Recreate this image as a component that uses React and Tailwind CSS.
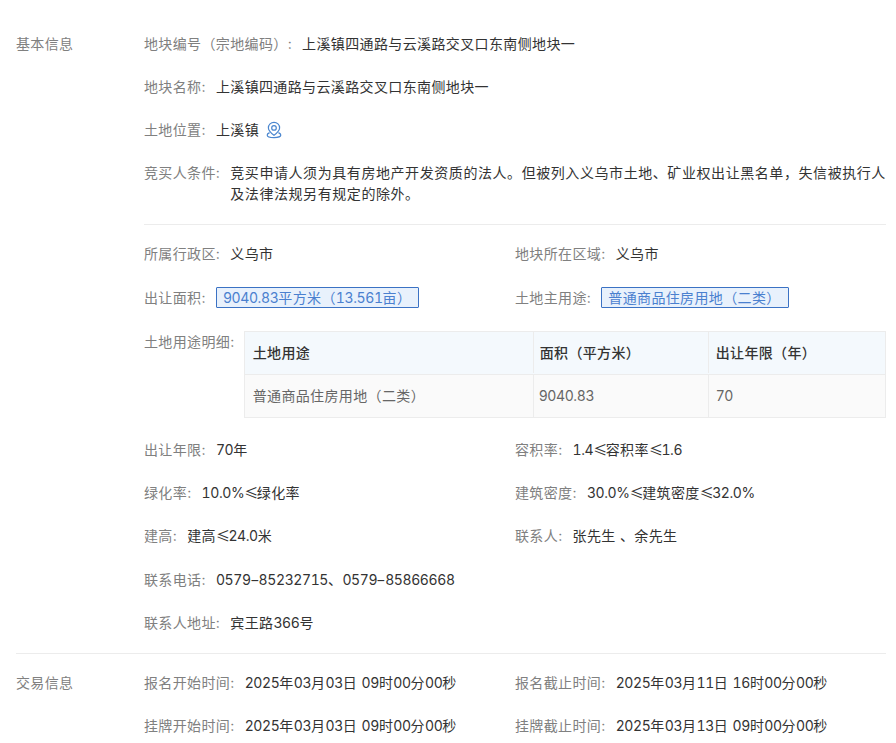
const Pin = () => (
  <svg width="18" height="18" viewBox="0 0 18 18" fill="none" stroke="#4a86cf" strokeWidth="1.2" className="ml-[6px] shrink-0">
    <path d="M9 1.300a5.600 5.600 0 0 0-5.600 5.600c0 2.900 2.600 5 5.600 7.400 3-2.400 5.600-4.500 5.600-7.400A5.600 5.600 0 0 0 9 1.300z" />
    <circle cx="9" cy="6.900" r="2.300" />
    <path d="M4.600 11.600C3 12.300 2.200 13.100 2.200 14c0 1.500 3 2.700 6.800 2.700s6.800-1.200 6.800-2.700c0-.9-.8-1.700-2.400-2.400" />
  </svg>
);

// Digits are tabular and a touch tighter than the CJK text; "≤" and "-" are wider than Inter's own glyphs.
const T = ({ children }) =>
  String(children)
    .split(/([0-9.%]+|≤|-)/)
    .filter(Boolean)
    .map((part, i) => {
      if (part === "≤")
        return (
          <span key={i} className="inline-block w-[12.5px] text-center tracking-normal [font-family:'Noto_Sans_CJK_SC',sans-serif]">
            {part}
          </span>
        );
      if (part === "-")
        return <span key={i} className="inline-block w-[8px] scale-x-150 text-center">{part}</span>;
      if (/^[0-9.%]+$/.test(part))
        return <span key={i} className="tracking-[-0.4px] tabular-nums">{part}</span>;
      return <span key={i}>{part}</span>;
    });

const Label = ({ children }) => <span className="shrink-0 text-[#808080]">{children}:</span>;

const Field = ({ label, children, className = "" }) => (
  <div className={`flex h-[21px] items-center leading-[21px] text-[#333333] ${className}`}>
    <Label>{label}</Label>
    <span className="ml-[10px] whitespace-nowrap">{children}</span>
  </div>
);

const Two = ({ children, className = "" }) => <div className={`grid grid-cols-2 ${className}`}>{children}</div>;

const Boxed = ({ label, value, width }) => (
  <div className="flex h-[21px] items-center leading-[21px]">
    <Label>{label}</Label>
    <span className={`ml-[10px] flex h-[21px] items-center rounded-[1px] border border-[#3b72c4] bg-[#e8f1fc] pl-[6px] text-[#4a80cf] whitespace-nowrap ${width}`}>
      <span><T>{value}</T></span>
    </span>
  </div>
);

const PlotName = () => (
  <>
    上溪镇四通路与云溪路交叉口东南<span className="[font-family:'Noto_Sans_CJK_TC',sans-serif]">侧</span>地块一
  </>
);

export default function App() {
  return (
    <div className="h-[743px] w-[896px] overflow-hidden bg-white pl-4 pr-[10px] text-[14px] tracking-[0.37px] antialiased [font-family:'Inter','Noto_Sans_CJK_SC',sans-serif]">
      <section className="flex">
        <div className="w-[128px] shrink-0 pt-[33px] leading-[21px] text-[#808080]">基本信息</div>
        <div className="flex min-w-0 flex-1 flex-col gap-[22px] border-b border-[#ececec] pt-[33px] pb-[20px]">
          <Field label="地块编号（宗地编码）"><PlotName /></Field>
          <Field label="地块名称"><PlotName /></Field>
          <Field label="土地位置">
            <span className="flex items-center">上溪镇<Pin /></span>
          </Field>
          <div className="flex leading-[21px] text-[#333333]">
            <Label>竞买人条件</Label>
            <span className="ml-[10px] tracking-[0.57px]">竞买申请人须为具有房地产开发资质的法人。但被列入义乌市土地、矿业权出让黑名单，失信被执行人及法律法规另有规定的除外。</span>
          </div>
        </div>
      </section>

      <section className="flex flex-col gap-[22px] border-b border-[#ececec] pt-[18px] pb-[20px] pl-[128px]">
        <Two>
          <Field label="所属行政区">义乌市</Field>
          <Field label="地块所在区域">义乌市</Field>
        </Two>
        <Two className="mt-px">
          <Boxed label="出让面积" value="9040.83平方米（13.561亩）" width="w-[203px]" />
          <Boxed label="土地主用途" value="普通商品住房用地（二类）" width="w-[188px]" />
        </Two>
        <div className="mt-px flex leading-[21px]">
          <Label>土地用途明细</Label>
          <div className="ml-[9px] flex-1 border border-[#ececec] text-[#666666]">
            <div className="grid h-[43px] grid-cols-[288px_175px_1fr] border-b border-[#ececec] bg-[#f4f9fd] pb-px font-medium text-[#333333]">
              <div className="flex items-center px-2">土地用途</div>
              <div className="flex items-center border-l border-[#ececec] px-[6px]">面积（平方米）</div>
              <div className="flex items-center border-l border-[#ececec] px-[7px]">出让年限（年）</div>
            </div>
            <div className="grid h-[42px] grid-cols-[288px_175px_1fr] bg-[#fafafa]">
              <div className="flex items-center px-2 pb-[2px]">普通商品住房用地（二类）</div>
              <div className="flex items-center border-l border-[#ececec] px-[5px] pb-[2px]"><span><T>9040.83</T></span></div>
              <div className="flex items-center border-l border-[#ececec] px-[7px] pb-[2px]"><span><T>70</T></span></div>
            </div>
          </div>
        </div>
        <Two className="-mt-px">
          <Field label="出让年限"><T>70年</T></Field>
          <Field label="容积率"><T>1.4≤容积率≤1.6</T></Field>
        </Two>
        <Two>
          <Field label="绿化率"><T>10.0%≤绿化率</T></Field>
          <Field label="建筑密度"><T>30.0%≤建筑密度≤32.0%</T></Field>
        </Two>
        <Two>
          <Field label="建高"><T>建高≤24.0米</T></Field>
          <Field label="联系人">张先生 、余先生</Field>
        </Two>
        <Field label="联系电话" className="mt-px"><T>0579-85232715、0579-85866668</T></Field>
        <Field label="联系人地址"><T>宾王路366号</T></Field>
      </section>

      <section className="flex pt-[18px]">
        <div className="w-[128px] shrink-0 leading-[21px] text-[#808080]">交易信息</div>
        <div className="flex min-w-0 flex-1 flex-col gap-[22px]">
          <Two>
            <Field label="报名开始时间"><T>2025年03月03日 09时00分00秒</T></Field>
            <Field label="报名截止时间"><T>2025年03月11日 16时00分00秒</T></Field>
          </Two>
          <Two>
            <Field label="挂牌开始时间"><T>2025年03月03日 09时00分00秒</T></Field>
            <Field label="挂牌截止时间"><T>2025年03月13日 09时00分00秒</T></Field>
          </Two>
        </div>
      </section>
    </div>
  );
}
